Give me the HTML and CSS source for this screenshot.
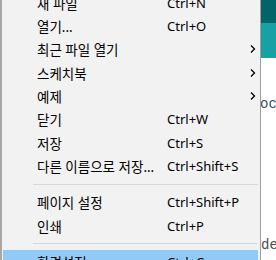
FILE: index.html
```html
<!DOCTYPE html>
<html lang="ko">
<head>
  <meta charset="UTF-8" />
  <title>파일 메뉴</title>
  <link rel="stylesheet" href="styles.css">
</head>
<body>
  <div class="menu">
    <div class="item"><span class="label">새 파일</span><span class="key">Ctrl+N</span></div>
    <div class="item"><span class="label">열기...</span><span class="key">Ctrl+O</span></div>
    <div class="item"><span class="label">최근 파일 열기</span><span class="key"></span><svg class="arrow" width="6" height="8" viewBox="0 0 6 8"><polyline points="1,0.5 4.5,4 1,7.5" /></svg></div>
    <div class="item"><span class="label">스케치북</span><span class="key"></span><svg class="arrow" width="6" height="8" viewBox="0 0 6 8"><polyline points="1,0.5 4.5,4 1,7.5" /></svg></div>
    <div class="item"><span class="label">예제</span><span class="key"></span><svg class="arrow" width="6" height="8" viewBox="0 0 6 8"><polyline points="1,0.5 4.5,4 1,7.5" /></svg></div>
    <div class="item"><span class="label">닫기</span><span class="key">Ctrl+W</span></div>
    <div class="item"><span class="label">저장</span><span class="key">Ctrl+S</span></div>
    <div class="item"><span class="label">다른 이름으로 저장...</span><span class="key">Ctrl+Shift+S</span></div>
    <div class="separator"></div>
    <div class="item"><span class="label">페이지 설정</span><span class="key">Ctrl+Shift+P</span></div>
    <div class="item"><span class="label">인쇄</span><span class="key">Ctrl+P</span></div>
    <div class="separator"></div>
    <div class="item active"><span class="label">환경설정</span><span class="key">Ctrl+Comma</span></div>
  </div>

  <div class="editor">
    <div class="toolbar"></div>
    <div class="tabs"></div>
    <div class="code">
      <div class="line first">oc</div>
      <div class="line last">de</div>
    </div>
  </div>
</body>
</html>
```

FILE: styles.css
```css
/* 전체 화면 */
body, html {
  margin: 0;
  padding: 0;
  height: 260px;
  overflow: hidden;
  background: #fff;
  font-family: "Noto Sans", "Noto Sans CJK KR", sans-serif;
  font-size: 13px;
  color: #000;
}

body {
  display: flex;
  align-items: flex-start;
}

/* 파일 메뉴 */
.menu {
  flex: 0 0 auto;
  width: 255px;
  margin-top: -9px;
  padding: 0 2px 4px 1px;
  background: #f2f2f2;
  border-left: 2px solid #a8a8a8;
  border-right: 1px solid #a0a0a0;
}

.item {
  display: grid;
  grid-template-columns: 130px 1fr 6px;
  align-items: center;
  height: 23.33px;
  padding: 0 2px 0 34px;
  white-space: nowrap;
}
.item.active {
  background: #91c9f7;
}

.label {
  font-size: 13.5px;
}

.arrow {
  display: block;
}
.arrow polyline {
  fill: none;
  stroke: #000;
  stroke-width: 1.3;
}

/* 구분선 */
.separator {
  height: 1px;
  margin: 6px 0 6px 30px;
  background: #d7d7d7;
}

/* 메뉴 뒤 에디터 */
.editor {
  flex: 1;
  height: 260px;
  overflow: hidden;
  background: #fff;
}
.toolbar {
  height: 23px;
  background: #006468;
}
.tabs {
  height: 35px;
  background: #17a1a5;
}
.code {
  font-family: "Liberation Mono", monospace;
  font-size: 14px;
  color: #434f54;
  white-space: nowrap;
}
.line.first {
  margin: 38px 0 0 -1px;
  line-height: 16px;
}
.line.last {
  margin: 125px 0 0 0;
  line-height: 16px;
}
```
